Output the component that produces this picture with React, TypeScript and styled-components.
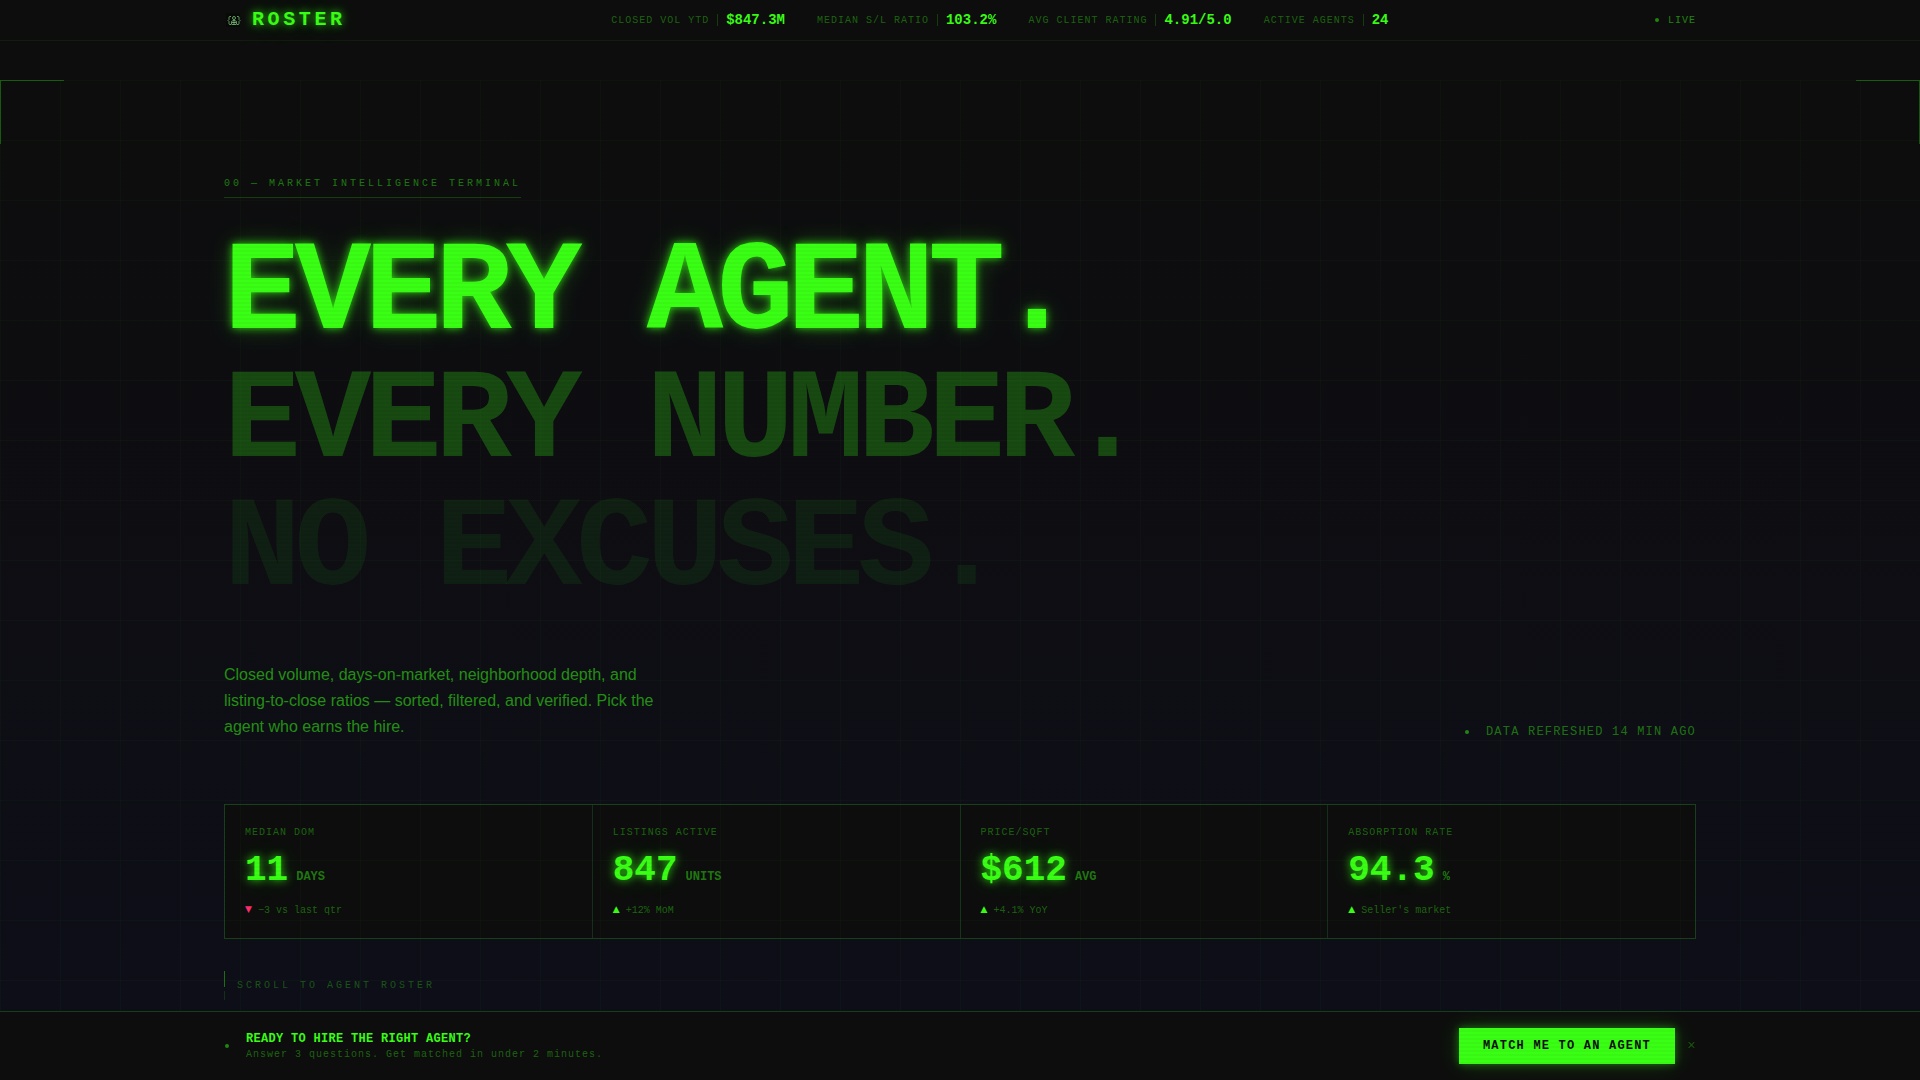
import React from "react";
import styled, { createGlobalStyle, css } from "styled-components";

const neon = (alpha: number) => `rgba(57, 255, 20, ${alpha})`;
const mono = `"Liberation Mono", "Courier New", monospace`;
const sans = `"Liberation Sans", Arial, sans-serif`;
const glow = `0 0 8px ${neon(0.8)}, 0 0 24px ${neon(0.25)}`;

const GlobalStyle = createGlobalStyle`
  *, *::before, *::after { box-sizing: border-box; }
  body { margin: 0; background: #0d0d0d; color: #39ff14; font-family: ${mono}; }
  h1, h2, p, dl, dt, dd { margin: 0; font: inherit; }
`;

const Page = styled.div`
  position: relative;
  display: flex;
  flex-direction: column;
  min-height: 100vh;

  &::after {
    content: "";
    position: absolute;
    inset: 0;
    pointer-events: none;
    background: repeating-linear-gradient(
      to bottom,
      transparent 0,
      transparent 2px,
      rgba(0, 0, 0, 0.03) 2px,
      rgba(0, 0, 0, 0.03) 4px
    );
  }
`;

const Container = styled.div`
  width: 100%;
  max-width: 1536px;
  margin: 0 auto;
  padding: 0 32px;
`;

const TopBar = styled.header`
  border-bottom: 1px solid ${neon(0.07)};
`;

const TopBarInner = styled(Container)`
  display: flex;
  align-items: center;
  justify-content: space-between;
  height: 40px;
`;

const Brand = styled.a`
  display: flex;
  align-items: center;
  gap: 8px;
  color: #39ff14;
  text-decoration: none;
`;

const BrandName = styled.span`
  font-size: 20px;
  line-height: 28px;
  font-weight: 700;
  letter-spacing: 0.18em;
  text-shadow: ${glow};
`;

const Ticker = styled.dl`
  display: flex;
  align-items: center;
  gap: 32px;
`;

const TickerItem = styled.div`
  display: flex;
  align-items: center;
  gap: 8px;
`;

const Caption = css`
  font-size: 10px;
  line-height: 15px;
  letter-spacing: 0.1em;
  color: ${neon(0.37)};
`;

const TickerLabel = styled.dt`
  ${Caption}
`;

const TickerRule = styled.span`
  width: 1px;
  height: 12px;
  background: ${neon(0.2)};
`;

const TickerValue = styled.dd`
  font-size: 14px;
  line-height: 20px;
  font-weight: 700;
`;

const Dot = styled.span`
  flex: none;
  width: 4px;
  height: 4px;
  margin: 0 1px;
  border-radius: 50%;
  background: ${neon(0.5)};
`;

const Live = styled.div`
  display: flex;
  align-items: center;
  gap: 8px;
  ${Caption}
  color: ${neon(0.5)};
`;

const Hero = styled.main`
  position: relative;
  flex: 1;
  margin-top: 39px;
  padding: 96px 0 8px;
  background: linear-gradient(180deg, #0d0d0d 0%, #0e0e19 100%);

  &::after {
    content: "";
    position: absolute;
    inset: 0;
    pointer-events: none;
    background-image: linear-gradient(${neon(0.025)} 1px, transparent 1px),
      linear-gradient(90deg, ${neon(0.025)} 1px, transparent 1px);
    background-size: 60px 60px;
  }
`;

const Corner = styled.span<{ $side: "left" | "right" }>`
  position: absolute;
  top: 0;
  ${(p) => p.$side}: 0;
  width: 64px;
  height: 64px;
  border-top: 1px solid ${neon(0.3)};
  border-${(p) => p.$side}: 1px solid ${neon(0.3)};
`;

const Eyebrow = styled.p`
  width: fit-content;
  padding-bottom: 6px;
  border-bottom: 1px solid ${neon(0.2)};
  font-size: 10px;
  line-height: 15px;
  letter-spacing: 0.3em;
  color: ${neon(0.45)};
`;

const Headline = styled.h1`
  margin-top: 32px;
  font-size: 128px;
  line-height: 128px;
  font-weight: 700;
  letter-spacing: -0.05em;
`;

const HeadlineRow = styled.span<{ $strength: number }>`
  display: block;
  color: ${(p) => neon(p.$strength)};
  text-shadow: ${(p) => (p.$strength === 1 ? glow : "none")};
`;

const IntroRow = styled.div`
  display: flex;
  align-items: flex-end;
  justify-content: space-between;
  margin-top: 48px;
`;

const Intro = styled.p`
  max-width: 448px;
  font-family: ${sans};
  font-size: 16px;
  line-height: 26px;
  color: ${neon(0.55)};
`;

const Refreshed = styled.p`
  display: flex;
  align-items: center;
  gap: 16px;
  font-size: 12px;
  line-height: 16px;
  letter-spacing: 0.1em;
  color: ${neon(0.43)};
`;

const Metrics = styled.dl`
  display: grid;
  grid-template-columns: repeat(4, 1fr);
  gap: 1px;
  margin-top: 64px;
  border: 1px solid #18401b;
  background: #14301a;
`;

const Metric = styled.div`
  display: flex;
  flex-direction: column;
  gap: 12px;
  padding: 20px;
  background: #0d0d0d;
`;

const MetricLabel = styled.dt`
  ${Caption}
`;

const MetricValue = styled.dd`
  display: flex;
  align-items: baseline;
  gap: 8px;
  padding-bottom: 2px;
  font-size: 36px;
  line-height: 37px;
  font-weight: 700;
  text-shadow: ${glow};
`;

const MetricUnit = styled.span`
  font-size: 12px;
  line-height: 18px;
  color: ${neon(0.45)};
  text-shadow: none;
`;

const MetricDelta = styled.dd`
  display: flex;
  gap: 6px;
  font-size: 10px;
  line-height: 15px;
  color: ${neon(0.37)};
`;

const Arrow = styled.span<{ $down?: boolean }>`
  font-family: "DejaVu Sans", sans-serif;
  font-size: 9px;
  line-height: 12px;
  color: ${(p) => (p.$down ? "#ff2d6b" : "#39ff14")};
`;

const ScrollHint = styled.p`
  display: flex;
  align-items: center;
  gap: 12px;
  margin-top: 32px;
  font-size: 10px;
  line-height: 15px;
  letter-spacing: 0.3em;
  color: ${neon(0.3)};
`;

const ScrollLine = styled.span`
  width: 1px;
  height: 29px;
  background: linear-gradient(
    to bottom,
    ${neon(0.4)} 0 16px,
    transparent 16px 20px,
    ${neon(0.15)} 20px
  );
`;

const ActionBar = styled.footer`
  border-top: 1px solid #18401b;
  background: #0d0d0d;
`;

const ActionInner = styled(Container)`
  display: flex;
  align-items: center;
  justify-content: space-between;
  padding-top: 16px;
  padding-bottom: 16px;
`;

const Pitch = styled.div`
  display: flex;
  align-items: center;
  gap: 16px;
`;

const PitchTitle = styled.h2`
  font-size: 12px;
  line-height: 16px;
  font-weight: 700;
  letter-spacing: 0.025em;
`;

const PitchText = styled.p`
  ${Caption}
`;

const Actions = styled.div`
  display: flex;
  align-items: center;
  gap: 12px;
`;

const MatchButton = styled.button`
  height: 36px;
  padding: 0 24px;
  border: 0;
  background: #39ff14;
  color: #0d0d0d;
  font-family: ${mono};
  font-size: 12px;
  line-height: 16px;
  font-weight: 700;
  letter-spacing: 0.1em;
  box-shadow: 0 0 8px ${neon(0.4)}, 0 0 24px ${neon(0.2)};
  cursor: pointer;
`;

const CloseButton = styled.button`
  width: 9px;
  padding: 0;
  border: 0;
  background: none;
  color: ${neon(0.3)};
  font-family: ${mono};
  font-size: 14px;
  line-height: 20px;
  cursor: pointer;
`;

const BrandMark = () => (
  <svg width="20" height="20" viewBox="0 0 20 20" fill="none" aria-hidden="true">
    <rect x="2" y="3" width="14" height="14" fill="#080a08" />
    <g stroke="#8fd48a" strokeOpacity="0.7" strokeWidth="1">
      <path d="M7 6.5H6Q5 6.5 5 7.5V9.5L4 10.5L5 11.5V13.5Q5 14.5 6 14.5H7" />
      <path d="M13 6.5H14Q15 6.5 15 7.5V9.5L16 10.5L15 11.5V13.5Q15 14.5 14 14.5H13" />
      <circle cx="10" cy="8" r="1.5" />
      <path d="M7.5 14.5V11.5L10 10L12.500 11.5V14.5M8 12.5H12M8 14.5H12M10 10V14.5" />
    </g>
  </svg>
);

const ticker = [
  { label: "CLOSED VOL YTD", value: "$847.3M" },
  { label: "MEDIAN S/L RATIO", value: "103.2%" },
  { label: "AVG CLIENT RATING", value: "4.91/5.0" },
  { label: "ACTIVE AGENTS", value: "24" },
];

const metrics = [
  { label: "MEDIAN DOM", value: "11", unit: "DAYS", delta: "−3 vs last qtr", down: true },
  { label: "LISTINGS ACTIVE", value: "847", unit: "UNITS", delta: "+12% MoM", down: false },
  { label: "PRICE/SQFT", value: "$612", unit: "AVG", delta: "+4.1% YoY", down: false },
  { label: "ABSORPTION RATE", value: "94.3", unit: "%", delta: "Seller's market", down: false },
];

export default function App() {
  return (
    <Page>
      <GlobalStyle />
      <TopBar>
        <TopBarInner>
          <Brand href="#">
            <BrandMark />
            <BrandName>ROSTER</BrandName>
          </Brand>
          <Ticker>
            {ticker.map((item) => (
              <TickerItem key={item.label}>
                <TickerLabel>{item.label}</TickerLabel>
                <TickerRule />
                <TickerValue>{item.value}</TickerValue>
              </TickerItem>
            ))}
          </Ticker>
          <Live>
            <Dot />
            LIVE
          </Live>
        </TopBarInner>
      </TopBar>

      <Hero>
        <Corner $side="left" />
        <Corner $side="right" />
        <Container>
          <Eyebrow>00 — MARKET INTELLIGENCE TERMINAL</Eyebrow>
          <Headline>
            <HeadlineRow $strength={1}>EVERY AGENT.</HeadlineRow>
            <HeadlineRow $strength={0.25}>EVERY NUMBER.</HeadlineRow>
            <HeadlineRow $strength={0.08}>NO EXCUSES.</HeadlineRow>
          </Headline>
          <IntroRow>
            <Intro>
              Closed volume, days-on-market, neighborhood depth, and listing-to-close ratios —
              sorted, filtered, and verified. Pick the agent who earns the hire.
            </Intro>
            <Refreshed>
              <Dot />
              DATA REFRESHED 14 MIN AGO
            </Refreshed>
          </IntroRow>
          <Metrics>
            {metrics.map((m) => (
              <Metric key={m.label}>
                <MetricLabel>{m.label}</MetricLabel>
                <MetricValue>
                  {m.value}
                  <MetricUnit>{m.unit}</MetricUnit>
                </MetricValue>
                <MetricDelta>
                  <Arrow $down={m.down}>{m.down ? "▼" : "▲"}</Arrow>
                  {m.delta}
                </MetricDelta>
              </Metric>
            ))}
          </Metrics>
          <ScrollHint>
            <ScrollLine />
            SCROLL TO AGENT ROSTER
          </ScrollHint>
        </Container>
      </Hero>

      <ActionBar>
        <ActionInner>
          <Pitch>
            <Dot />
            <div>
              <PitchTitle>READY TO HIRE THE RIGHT AGENT?</PitchTitle>
              <PitchText>Answer 3 questions. Get matched in under 2 minutes.</PitchText>
            </div>
          </Pitch>
          <Actions>
            <MatchButton type="button">MATCH ME TO AN AGENT</MatchButton>
            <CloseButton type="button" aria-label="Dismiss">
              ×
            </CloseButton>
          </Actions>
        </ActionInner>
      </ActionBar>
    </Page>
  );
}
